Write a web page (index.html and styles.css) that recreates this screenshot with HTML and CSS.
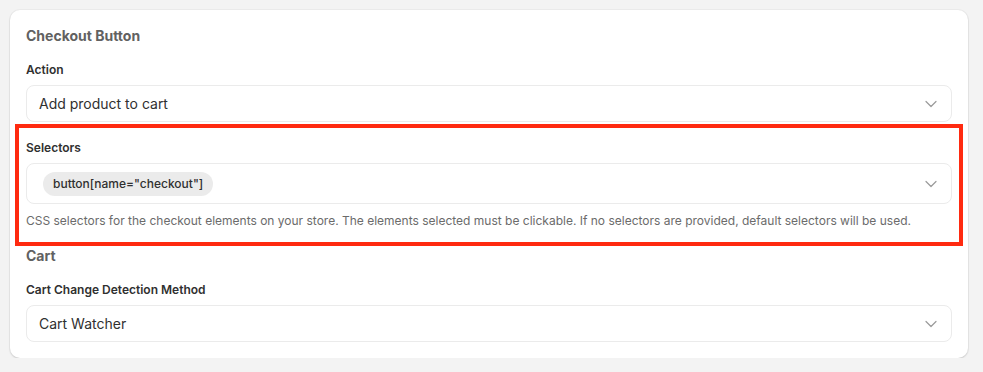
FILE: index.html
```html
<!DOCTYPE html>
<html>
<head>
<meta charset="utf-8">
<link rel="stylesheet" href="styles.css">
</head>
<body>
<div class="card">
  <h2 class="section-title">Checkout Button</h2>
  <div class="field">
    <div class="label">Action</div>
    <div class="select">
      <span class="value">Add product to cart</span>
      <svg class="chev" width="12" height="8" viewBox="0 0 12 8"><path d="M1 1.5 L6 6.5 L11 1.5" fill="none" stroke="#9a9a9a" stroke-width="1.2" stroke-linecap="round" stroke-linejoin="round"/></svg>
    </div>
  </div>
  <div class="field highlighted">
    <div class="label">Selectors</div>
    <div class="select tags">
      <span class="chip">button[name="checkout"]</span>
      <svg class="chev" width="12" height="8" viewBox="0 0 12 8"><path d="M1 1.5 L6 6.5 L11 1.5" fill="none" stroke="#9a9a9a" stroke-width="1.2" stroke-linecap="round" stroke-linejoin="round"/></svg>
    </div>
    <div class="help">CSS selectors for the checkout elements on your store. The elements selected must be clickable. If no selectors are provided, default selectors will be used.</div>
  </div>
  <h2 class="section-title cart-title">Cart</h2>
  <div class="field">
    <div class="label">Cart Change Detection Method</div>
    <div class="select">
      <span class="value">Cart Watcher</span>
      <svg class="chev" width="12" height="8" viewBox="0 0 12 8"><path d="M1 1.5 L6 6.5 L11 1.5" fill="none" stroke="#9a9a9a" stroke-width="1.2" stroke-linecap="round" stroke-linejoin="round"/></svg>
    </div>
  </div>
</div>
</body>
</html>
```
FILE: styles.css
```css
* { box-sizing: border-box; }
html, body { margin: 0; padding: 0; }
body {
  background: #f3f3f3;
  font-family: Inter, "Noto Sans", sans-serif;
  color: #303030;
  padding: 10px 15px 0 10px;
}
.card {
  background: #fff;
  border-radius: 10px;
  box-shadow: 0 1px 2px rgba(0,0,0,0.14), 0 0 0 1px rgba(0,0,0,0.03);
  padding: 16px 16px 16px 16px;
  display: flex;
  flex-direction: column;
}
.section-title {
  margin: 0;
  font-size: 14px;
  line-height: 20px;
  font-weight: 650;
  color: #616161;
}
.field { display: flex; flex-direction: column; }
.section-title + .field { margin-top: 16px; }
.label {
  font-size: 12px;
  line-height: 16px;
  font-weight: 600;
  color: #303030;
  margin-bottom: 7px;
}
.select {
  height: 37px;
  border: 1px solid #ebebeb;
  border-radius: 8px;
  display: flex;
  align-items: center;
  justify-content: space-between;
  padding: 0 14px 0 12px;
}
.select .value { font-size: 14px; color: #303030; }
.chev { display: block; }
.field + .field { margin-top: 18px; }
.tags { height: 41px; padding-left: 16px; }
.chip {
  background: #ebebeb;
  border-radius: 12px;
  height: 24px;
  line-height: 24px;
  padding: 0 10px;
  font-size: 12px;
  font-weight: 500;
  color: #303030;
}
.help {
  font-size: 12px;
  line-height: 16px;
  color: #6b6b6b;
  margin-top: 9px;
}
.highlighted { position: relative; }
.highlighted::after {
  content: "";
  position: absolute;
  left: -11px;
  right: -11px;
  top: -16px;
  bottom: -17px;
  border: 4px solid #ff2a10;
  pointer-events: none;
}
.cart-title { margin-top: 17px; }
```
